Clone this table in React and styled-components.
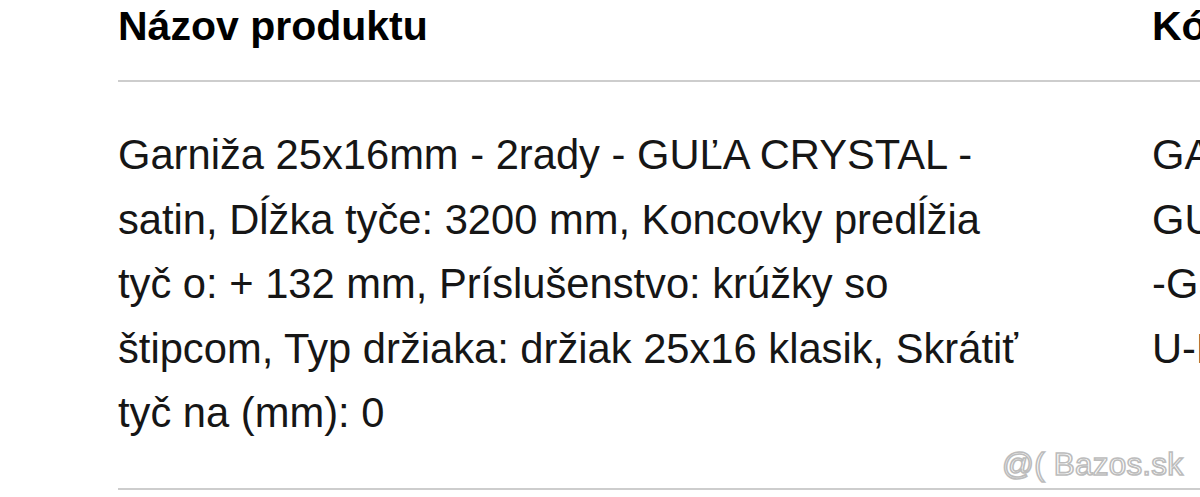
import React from "react";
import styled, { createGlobalStyle } from "styled-components";

const Global = createGlobalStyle`
  html, body { margin: 0; padding: 0; background: #fff; }
  body { overflow: hidden; width: 1200px; height: 497px; }
`;

const Page = styled.div`
  position: relative;
  width: 1200px;
  height: 497px;
  overflow: hidden;
  padding-left: 118px;
  box-sizing: border-box;
  font-family: "Liberation Sans", Arial, sans-serif;
  color: #111;
`;

const Table = styled.div`
  width: 1500px;
`;

const Row = styled.div`
  display: grid;
  grid-template-columns: 1034px 400px;
  border-bottom: 2px solid #cdcdcd;
  padding: ${(p) => (p.$head ? "3px 0 30px" : "41px 0 42px")};
`;

const Cell = styled.div`
  font-size: ${(p) => (p.$head ? "41px" : "41.7px")};
  font-weight: ${(p) => (p.$head ? 700 : 400)};
  line-height: ${(p) => (p.$head ? "47px" : "64.5px")};
  padding-right: ${(p) => (p.$first ? "122px" : "0")};
  color: ${(p) => (p.$head ? "#000" : "#161616")};
`;

const Watermark = styled.div`
  position: absolute;
  left: 1002px;
  top: 445px;
  font-family: "Liberation Sans", Arial, sans-serif;
  font-size: 31.5px;
  line-height: 38px;
  color: #fff;
  -webkit-text-stroke: 1.6px #bcbcbc;
  white-space: nowrap;
  letter-spacing: 0.2px;
`;

export default function App() {
  return (
    <Page>
      <Global />
      <Table>
        <Row $head>
          <Cell $head $first>Názov produktu</Cell>
          <Cell $head>Kód produktu</Cell>
        </Row>
        <Row>
          <Cell $first>
            Garniža 25x16mm - 2rady - GUĽA CRYSTAL - satin, Dĺžka tyče: 3200 mm,
            Koncovky predĺžia tyč o: + 132 mm, Príslušenstvo: krúžky so štipcom,
            Typ držiaka: držiak 25x16 klasik, Skrátiť tyč na (mm): 0
          </Cell>
          <Cell>
            GARNIŽA25x16 GUĽACRYSTAL {"\u2011"}GSATIN25x16 U{"\u2011"}KLASIK
          </Cell>
        </Row>
      </Table>
      <Watermark>@( Bazos.sk</Watermark>
    </Page>
  );
}
